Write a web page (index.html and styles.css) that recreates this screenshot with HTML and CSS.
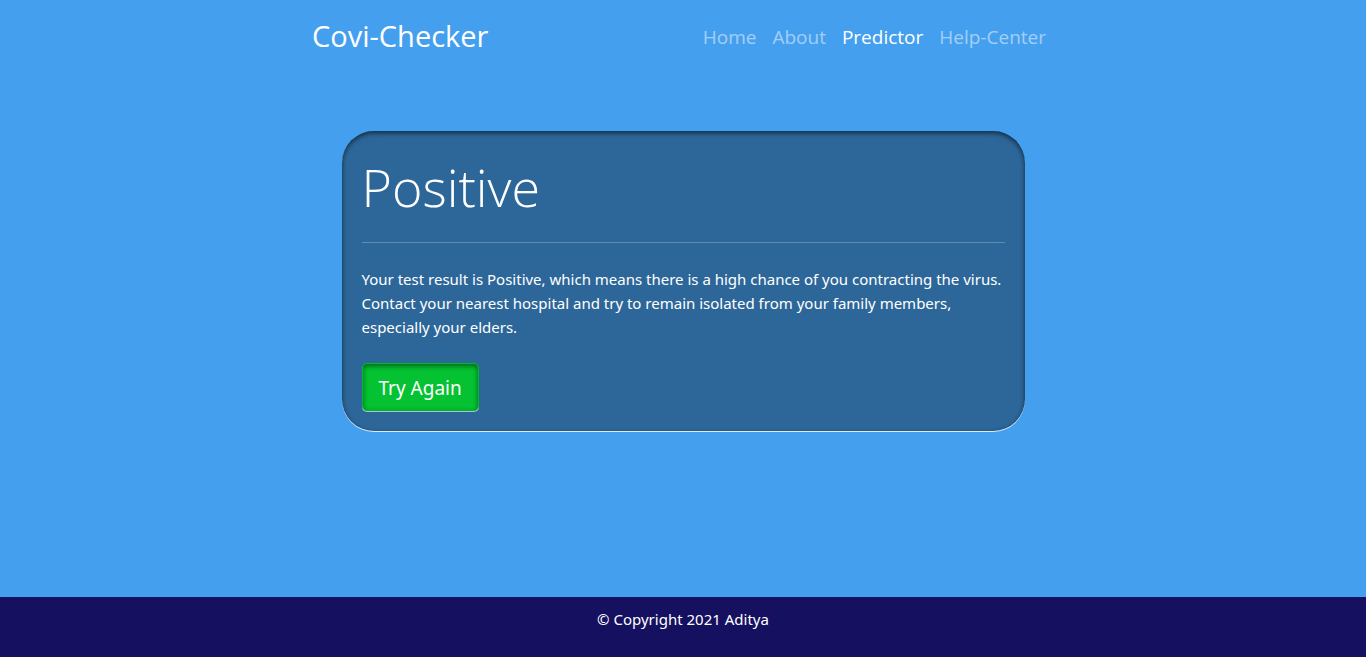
FILE: index.html
```html
<!DOCTYPE html>
<html lang="en">
<head>
  <meta charset="utf-8">
  <meta name="viewport" content="width=device-width, initial-scale=1">
  <title>Covi-Checker</title>
  <link rel="stylesheet" href="styles.css">
</head>
<body class="page">
  <header class="site-header">
    <a class="brand" href="#">Covi-Checker</a>
    <nav class="site-nav" aria-label="Main">
      <a class="nav-link" href="#">Home</a>
      <a class="nav-link" href="#">About</a>
      <a class="nav-link nav-link-active" href="#" aria-current="page">Predictor</a>
      <a class="nav-link" href="#">Help-Center</a>
    </nav>
  </header>
  <main class="content">
    <section class="result">
      <h1 class="result-title">Positive</h1>
      <hr class="result-rule">
      <p class="result-text">Your test result is Positive, which means there is a high chance of you contracting the virus. Contact your nearest hospital and try to remain isolated from your family members, especially your elders.</p>
      <button class="retry" type="button">Try Again</button>
    </section>
  </main>
  <footer class="site-footer">
    <p class="copyright">© Copyright 2021 Aditya</p>
  </footer>
</body>
</html>
```
FILE: styles.css
```css
* {
  box-sizing: border-box;
}

.page {
  display: flex;
  flex-direction: column;
  min-height: 100vh;
  margin: 0;
  background: #459fef;
  color: #fff;
  font-family: "Segoe UI", "Noto Sans", "Open Sans", sans-serif;
  font-size: 15px;
  line-height: 24px;
}

.site-header {
  display: flex;
  flex-wrap: wrap;
  align-items: center;
  justify-content: space-between;
  width: 100%;
  max-width: 742px;
  margin: 0 auto;
  padding: 14px 0;
  font-family: "Segoe UI", "Open Sans", "Noto Sans", sans-serif;
}

.brand {
  padding-bottom: 2px;
  color: #fff;
  font-size: 29px;
  line-height: 42px;
  text-decoration: none;
}

.site-nav {
  display: flex;
  flex-wrap: wrap;
}

.nav-link {
  padding: 8px;
  color: rgba(255, 255, 255, 0.5);
  font-size: 19px;
  line-height: 30px;
  text-decoration: none;
}

.nav-link-active {
  color: #fff;
}

.content {
  flex: 1;
  padding: 57px 16px 64px;
}

.result {
  width: 100%;
  max-width: 683px;
  margin: 0 auto;
  padding: 20px;
  border-radius: 32px;
  background: #2d6799;
  box-shadow: inset 0 2px 5px rgba(0, 0, 0, 0.6), 0 1px 0 rgba(255, 255, 255, 0.8);
}

.result-title {
  margin: 0;
  padding: 2px 0 22px;
  font-family: "Segoe UI", "Open Sans", "Noto Sans", sans-serif;
  font-size: 52px;
  font-weight: 300;
  line-height: 67px;
}

.result-rule {
  margin: 0 0 24px;
  border: 0;
  border-top: 1px solid rgba(255, 255, 255, 0.25);
}

.result-text {
  margin: 0 0 24px;
}

.retry {
  display: block;
  padding: 9px 16px 7px;
  border: 1px solid #00b92d;
  border-radius: 5px;
  background: #04c231;
  box-shadow: inset 0 2px 5px rgba(0, 0, 0, 0.5), 0 1px 0 rgba(255, 255, 255, 0.6);
  color: #fff;
  font-family: inherit;
  font-size: 19px;
  line-height: 30px;
}

.site-footer {
  padding: 10px 16px 26px;
  background: #151060;
  text-align: center;
}

.copyright {
  margin: 0;
}
```
